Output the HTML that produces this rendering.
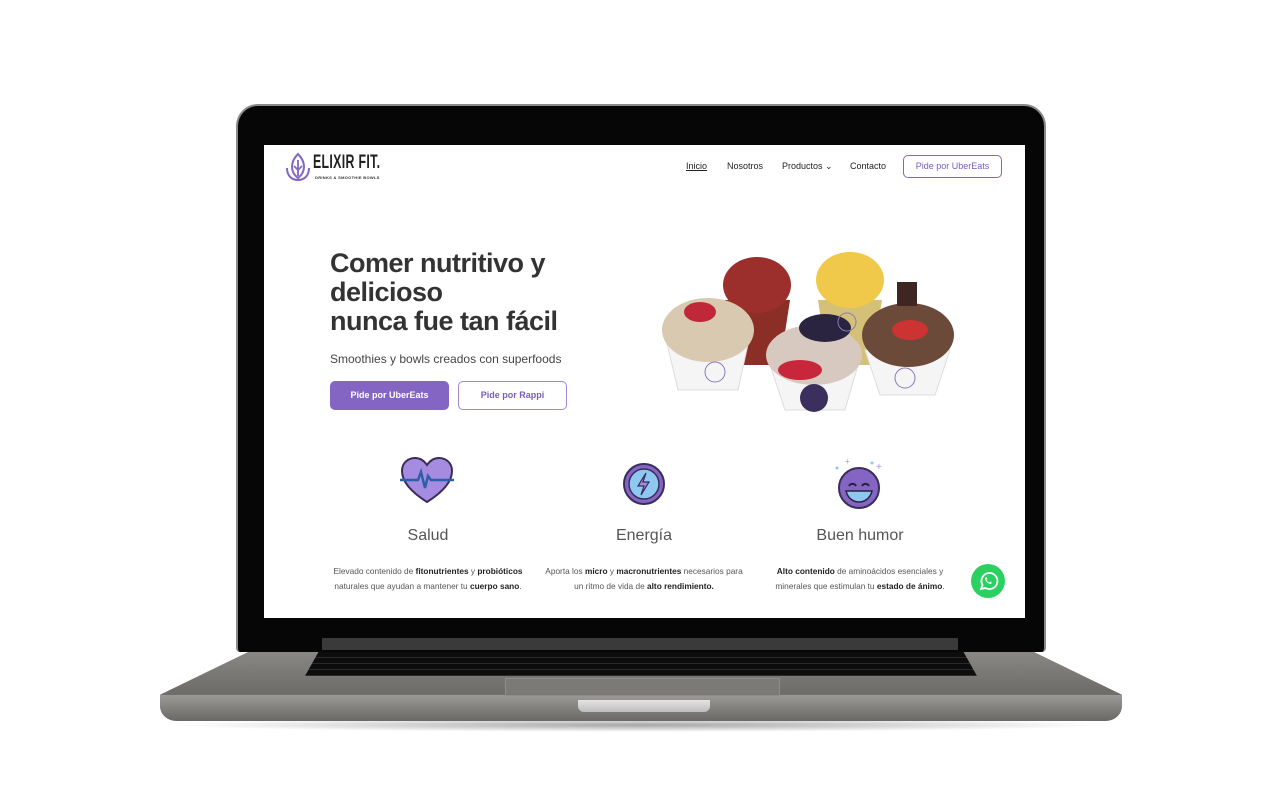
<!DOCTYPE html>
<html><head><meta charset="utf-8">
<style>
*{margin:0;padding:0;box-sizing:border-box}
body{width:1280px;height:800px;background:#fff;position:relative;overflow:hidden;font-family:"Liberation Sans",sans-serif;color:#333}
.abs{position:absolute}
.lid{left:236px;top:104px;width:810px;height:548px;background:#060606;border-radius:22px 22px 4px 4px;border:2px solid #8a8a8a;border-bottom:none}
.screen{left:264px;top:145px;width:761px;height:473px;background:#fff;overflow:hidden}
.hinge{left:322px;top:638px;width:636px;height:12px;background:#3a3a3a}
.base{left:160px;top:648px;width:962px;height:72px;background:linear-gradient(#8c8a87,#6f6d6a 60%,#7a7875);clip-path:polygon(10% 0,90% 0,100% 65%,100% 100%,0 100%,0 65%);border-radius:0 0 14px 14px}
.lip{left:160px;top:695px;width:962px;height:26px;background:linear-gradient(#9c9a97,#6a6865);border-radius:0 0 16px 16px}
.shadow{left:170px;top:718px;width:940px;height:14px;background:radial-gradient(ellipse at center,rgba(0,0,0,.35),rgba(0,0,0,0) 70%)}
.kb{left:305px;top:652px;width:672px;height:24px;background:repeating-linear-gradient(#0d0d0d 0 5px,#2a2a2a 5px 6px);clip-path:polygon(2% 0,98% 0,100% 100%,0 100%)}
.pad{left:505px;top:678px;width:275px;height:18px;background:#7c7a77;border:1px solid #8f8d8a}
.notch{left:578px;top:700px;width:132px;height:12px;background:linear-gradient(#e4e4e4,#bdbdbd);border-radius:0 0 6px 6px}
nav a{position:absolute;top:161px;font-size:9px;color:#222;text-decoration:none}
.btn{position:absolute;border-radius:5px;font-size:9px;text-align:center;font-weight:bold}
h1{position:absolute;left:330px;top:249px;font-size:27px;line-height:29px;font-weight:bold;color:#333;letter-spacing:-.5px}
.feat{position:absolute;text-align:center;font-size:8.3px;line-height:15px;color:#555}
.feat h3{font-size:16px;font-weight:normal;color:#555;margin-bottom:21px}
.feat b{color:#222}
</style></head><body>
<div class="abs shadow"></div>
<div class="abs base"></div>
<div class="abs lip"></div>
<div class="abs kb"></div>
<div class="abs pad"></div>
<div class="abs notch"></div>
<div class="abs lid"></div>
<div class="abs hinge"></div>
<div class="abs screen"></div>

<svg class="abs" style="left:285px;top:152px" width="26" height="30" viewBox="0 0 26 30"><path d="M13 2 C5 10 5 20 13 26 C21 20 21 10 13 2Z" fill="none" stroke="#8465c4" stroke-width="2"/><path d="M13 8v16M13 18l-4-4M13 18l4-4" stroke="#8465c4" stroke-width="1.8" fill="none"/><path d="M2 16c0 8 5 12 11 12s11-4 11-12" fill="none" stroke="#8465c4" stroke-width="2"/></svg>
<div class="abs" style="left:313px;top:152px;font-size:19px;font-weight:bold;color:#222;transform:scaleX(.65);transform-origin:left;letter-spacing:.5px">ELIXIR FIT.</div>
<div class="abs" style="left:315px;top:175px;font-size:4px;color:#333;font-weight:bold;letter-spacing:.3px">DRINKS &amp; SMOOTHIE BOWLS</div>

<nav>
<a style="left:686px;text-decoration:underline">Inicio</a>
<a style="left:727px">Nosotros</a>
<a style="left:782px">Productos ⌄</a>
<a style="left:850px">Contacto</a>
</nav>
<div class="btn" style="left:903px;top:155px;width:99px;height:23px;border:1px solid #8465c4;color:#7a5bbf;line-height:21px;font-weight:normal">Pide por UberEats</div>

<h1>Comer nutritivo y<br>delicioso<br>nunca fue tan fácil</h1>
<div class="abs" style="left:330px;top:352px;font-size:12px;color:#444">Smoothies y bowls creados con superfoods</div>
<div class="btn" style="left:330px;top:381px;width:119px;height:29px;background:#8465c4;color:#fff;line-height:29px">Pide por UberEats</div>
<div class="btn" style="left:458px;top:381px;width:109px;height:29px;border:1px solid #9f88d6;color:#7a5bbf;line-height:27px">Pide por Rappi</div>

<svg class="abs" style="left:650px;top:240px" width="312" height="178" viewBox="0 0 312 178">
<path d="M75 60 L85 125 L130 125 L140 60Z" fill="#8a2e26"/><ellipse cx="107" cy="45" rx="34" ry="28" fill="#9c2f2c"/>
<path d="M168 60 L178 125 L222 125 L232 60Z" fill="#d4c177"/><ellipse cx="200" cy="40" rx="34" ry="28" fill="#f0c84a"/>
<path d="M15 95 L28 150 L88 150 L100 95Z" fill="#f5f5f5" stroke="#ddd"/><ellipse cx="58" cy="90" rx="46" ry="32" fill="#d9c9b0"/><ellipse cx="50" cy="72" rx="16" ry="10" fill="#c0283a"/>
<path d="M215 110 L230 155 L285 155 L300 110Z" fill="#f5f5f5" stroke="#ddd"/><ellipse cx="258" cy="95" rx="46" ry="32" fill="#6b4a3a"/><rect x="247" y="42" width="20" height="24" fill="#3e2722"/><ellipse cx="260" cy="90" rx="18" ry="10" fill="#c33"/>
<path d="M120 125 L135 170 L195 170 L208 125Z" fill="#f5f5f5" stroke="#ddd"/><ellipse cx="164" cy="115" rx="48" ry="30" fill="#d8c9c0"/><ellipse cx="175" cy="88" rx="26" ry="14" fill="#2a2440"/><ellipse cx="150" cy="130" rx="22" ry="10" fill="#c8263a"/><circle cx="164" cy="158" r="14" fill="#3b2f5e"/>
<circle cx="65" cy="132" r="10" fill="none" stroke="#8a7ab8"/><circle cx="197" cy="82" r="9" fill="none" stroke="#8a7ab8"/><circle cx="255" cy="138" r="10" fill="none" stroke="#8a7ab8"/>
</svg>

<svg class="abs" style="left:398px;top:456px" width="58" height="48" viewBox="0 0 58 48"><path d="M29 46 C10 34 4 24 4 15 C4 6 11 2 17 2 C23 2 27 6 29 9 C31 6 35 2 41 2 C47 2 54 6 54 15 C54 24 48 34 29 46Z" fill="#a58ce0" stroke="#3a2d5a" stroke-width="2"/><path d="M2 24h18l3-8 4 16 3-12 3 4h23" fill="none" stroke="#2d5fa8" stroke-width="2.5"/></svg>
<svg class="abs" style="left:622px;top:462px" width="44" height="44" viewBox="0 0 44 44"><circle cx="22" cy="22" r="20" fill="#8465c4" stroke="#3a2d5a" stroke-width="2"/><circle cx="22" cy="22" r="15" fill="#8ec8f0" stroke="#3a2d5a" stroke-width="1.5"/><path d="M24 11l-8 13h6l-3 9 8-13h-6z" fill="#a58ce0" stroke="#3a2d5a" stroke-width="1.2"/></svg>
<svg class="abs" style="left:832px;top:456px" width="56" height="54" viewBox="0 0 56 54"><circle cx="27" cy="32" r="20" fill="#8465c4" stroke="#3a2d5a" stroke-width="2"/><path d="M17 30a4 4 0 0 1 7 0M30 30a4 4 0 0 1 7 0" fill="none" stroke="#2a2040" stroke-width="2"/><path d="M14 35h26c-2 8-8 11-13 11s-11-3-13-11z" fill="#8ec8f0" stroke="#2a2040" stroke-width="1.5"/><text x="13" y="8" font-size="8" fill="#a58ce0">+</text><text x="44" y="14" font-size="10" fill="#a58ce0">+</text><circle cx="5" cy="12" r="1.5" fill="#8ec8f0"/><circle cx="40" cy="7" r="1.5" fill="#8ec8f0"/></svg>

<div class="feat" style="left:326px;top:528px;width:204px"><h3>Salud</h3>Elevado contenido de <b>fitonutrientes</b> y <b>probióticos</b><br>naturales que ayudan a mantener tu <b>cuerpo sano</b>.</div>
<div class="feat" style="left:540px;top:528px;width:208px"><h3>Energía</h3>Aporta los <b>micro</b> y <b>macronutrientes</b> necesarios para<br>un ritmo de vida de <b>alto rendimiento.</b></div>
<div class="feat" style="left:760px;top:528px;width:200px"><h3>Buen humor</h3><b>Alto contenido</b> de aminoácidos esenciales y<br>minerales que estimulan tu <b>estado de ánimo</b>.</div>

<svg class="abs" style="left:970px;top:563px" width="36" height="36" viewBox="0 0 36 36"><circle cx="18" cy="18" r="17" fill="#2bd160"/><path d="M11 26l1.5-4a8 8 0 1 1 3 3z" fill="none" stroke="#fff" stroke-width="1.8"/><path d="M15 15c0 3 3 6 6 6l1-1.5-2-1-1 1c-1-.5-2-1.5-2.5-2.5l1-1-1-2z" fill="#fff"/></svg>
</body></html>
